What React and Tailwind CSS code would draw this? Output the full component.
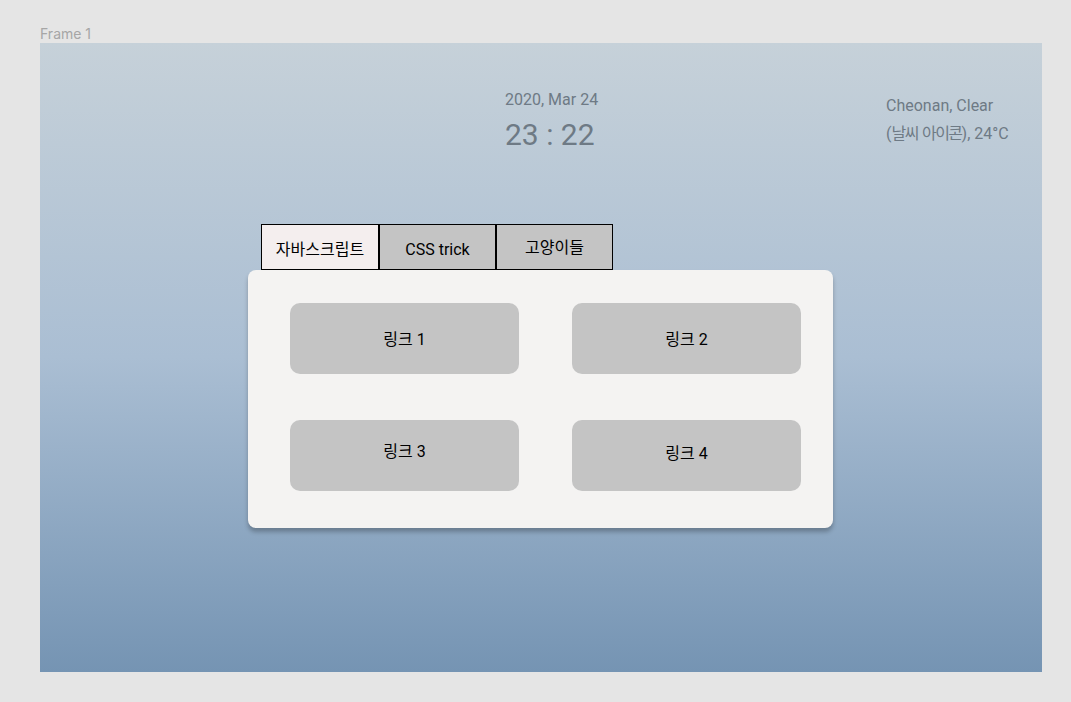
export default function App() {
    const links = [
        { label: '링크 1', pad: 'pt-[2px]' },
        { label: '링크 2', pad: 'pt-[2px]' },
        { label: '링크 3', pad: 'pb-[8px]' },
        { label: '링크 4', pad: 'pb-[4px]' },
    ];

    return (
        <div className="w-[1071px] h-[702px] bg-[#e5e5e5] pt-[26px] pl-[40px] overflow-hidden font-['Roboto','Noto_Sans_CJK_KR',sans-serif]">
            <p className="text-[14px] leading-[16px] text-[#a6a6a6] mb-[1px] font-['Inter','Roboto',sans-serif]">Frame 1</p>

            <div className="w-[1002px] h-[629px] bg-[linear-gradient(180deg,#c6d1d9_0%,#aabed3_50%,#7594b3_100%)] pt-[48px]">
                <header className="flex items-start">
                    <div className="ml-[465px] w-[100px] text-[#6e7a85]">
                        <p className="text-[16px] leading-[18px]">2020, Mar 24</p>
                        <p className="text-[30px] leading-[36px] mt-[8px]">23 : 22</p>
                    </div>
                    <div className="ml-[281px] mt-[1px] text-[16px] leading-[28px] text-[#6e7a85]">
                        <p>Cheonan, Clear</p>
                        <p>
                            (<span className="tracking-[-1.5px]">날씨</span> <span className="tracking-[-1.5px]">아이콘</span>), 24°C
                        </p>
                    </div>
                </header>

                <section className="ml-[208px] mt-[71px] w-[585px]">
                    <div className="flex pl-[13px]">
                        <button className="w-[118px] h-[46px] border border-black bg-[#f4eeee] text-[16px] text-black pt-[6px]">자바스크립트</button>
                        <button className="w-[117px] h-[46px] border border-black bg-[#c4c4c4] text-[16px] text-black pt-[6px]">CSS trick</button>
                        <button className="w-[117px] h-[46px] border border-black bg-[#c4c4c4] text-[16px] text-black pt-[2px]">고양이들</button>
                    </div>

                    <div className="h-[258px] rounded-[8px] bg-[#f4f3f2] shadow-[0_4px_4px_rgba(0,0,0,0.25)] pt-[33px] pl-[42px]">
                        <div className="grid grid-cols-[229px_229px] gap-x-[53px] gap-y-[46px]">
                            {links.map((l) => (
                                <a key={l.label} href="#" className={`h-[71px] rounded-[10px] bg-[#c4c4c4] flex items-center justify-center text-[16px] text-black ${l.pad}`}>
                                    {l.label}
                                </a>
                            ))}
                        </div>
                    </div>
                </section>
            </div>
        </div>
    );
}
